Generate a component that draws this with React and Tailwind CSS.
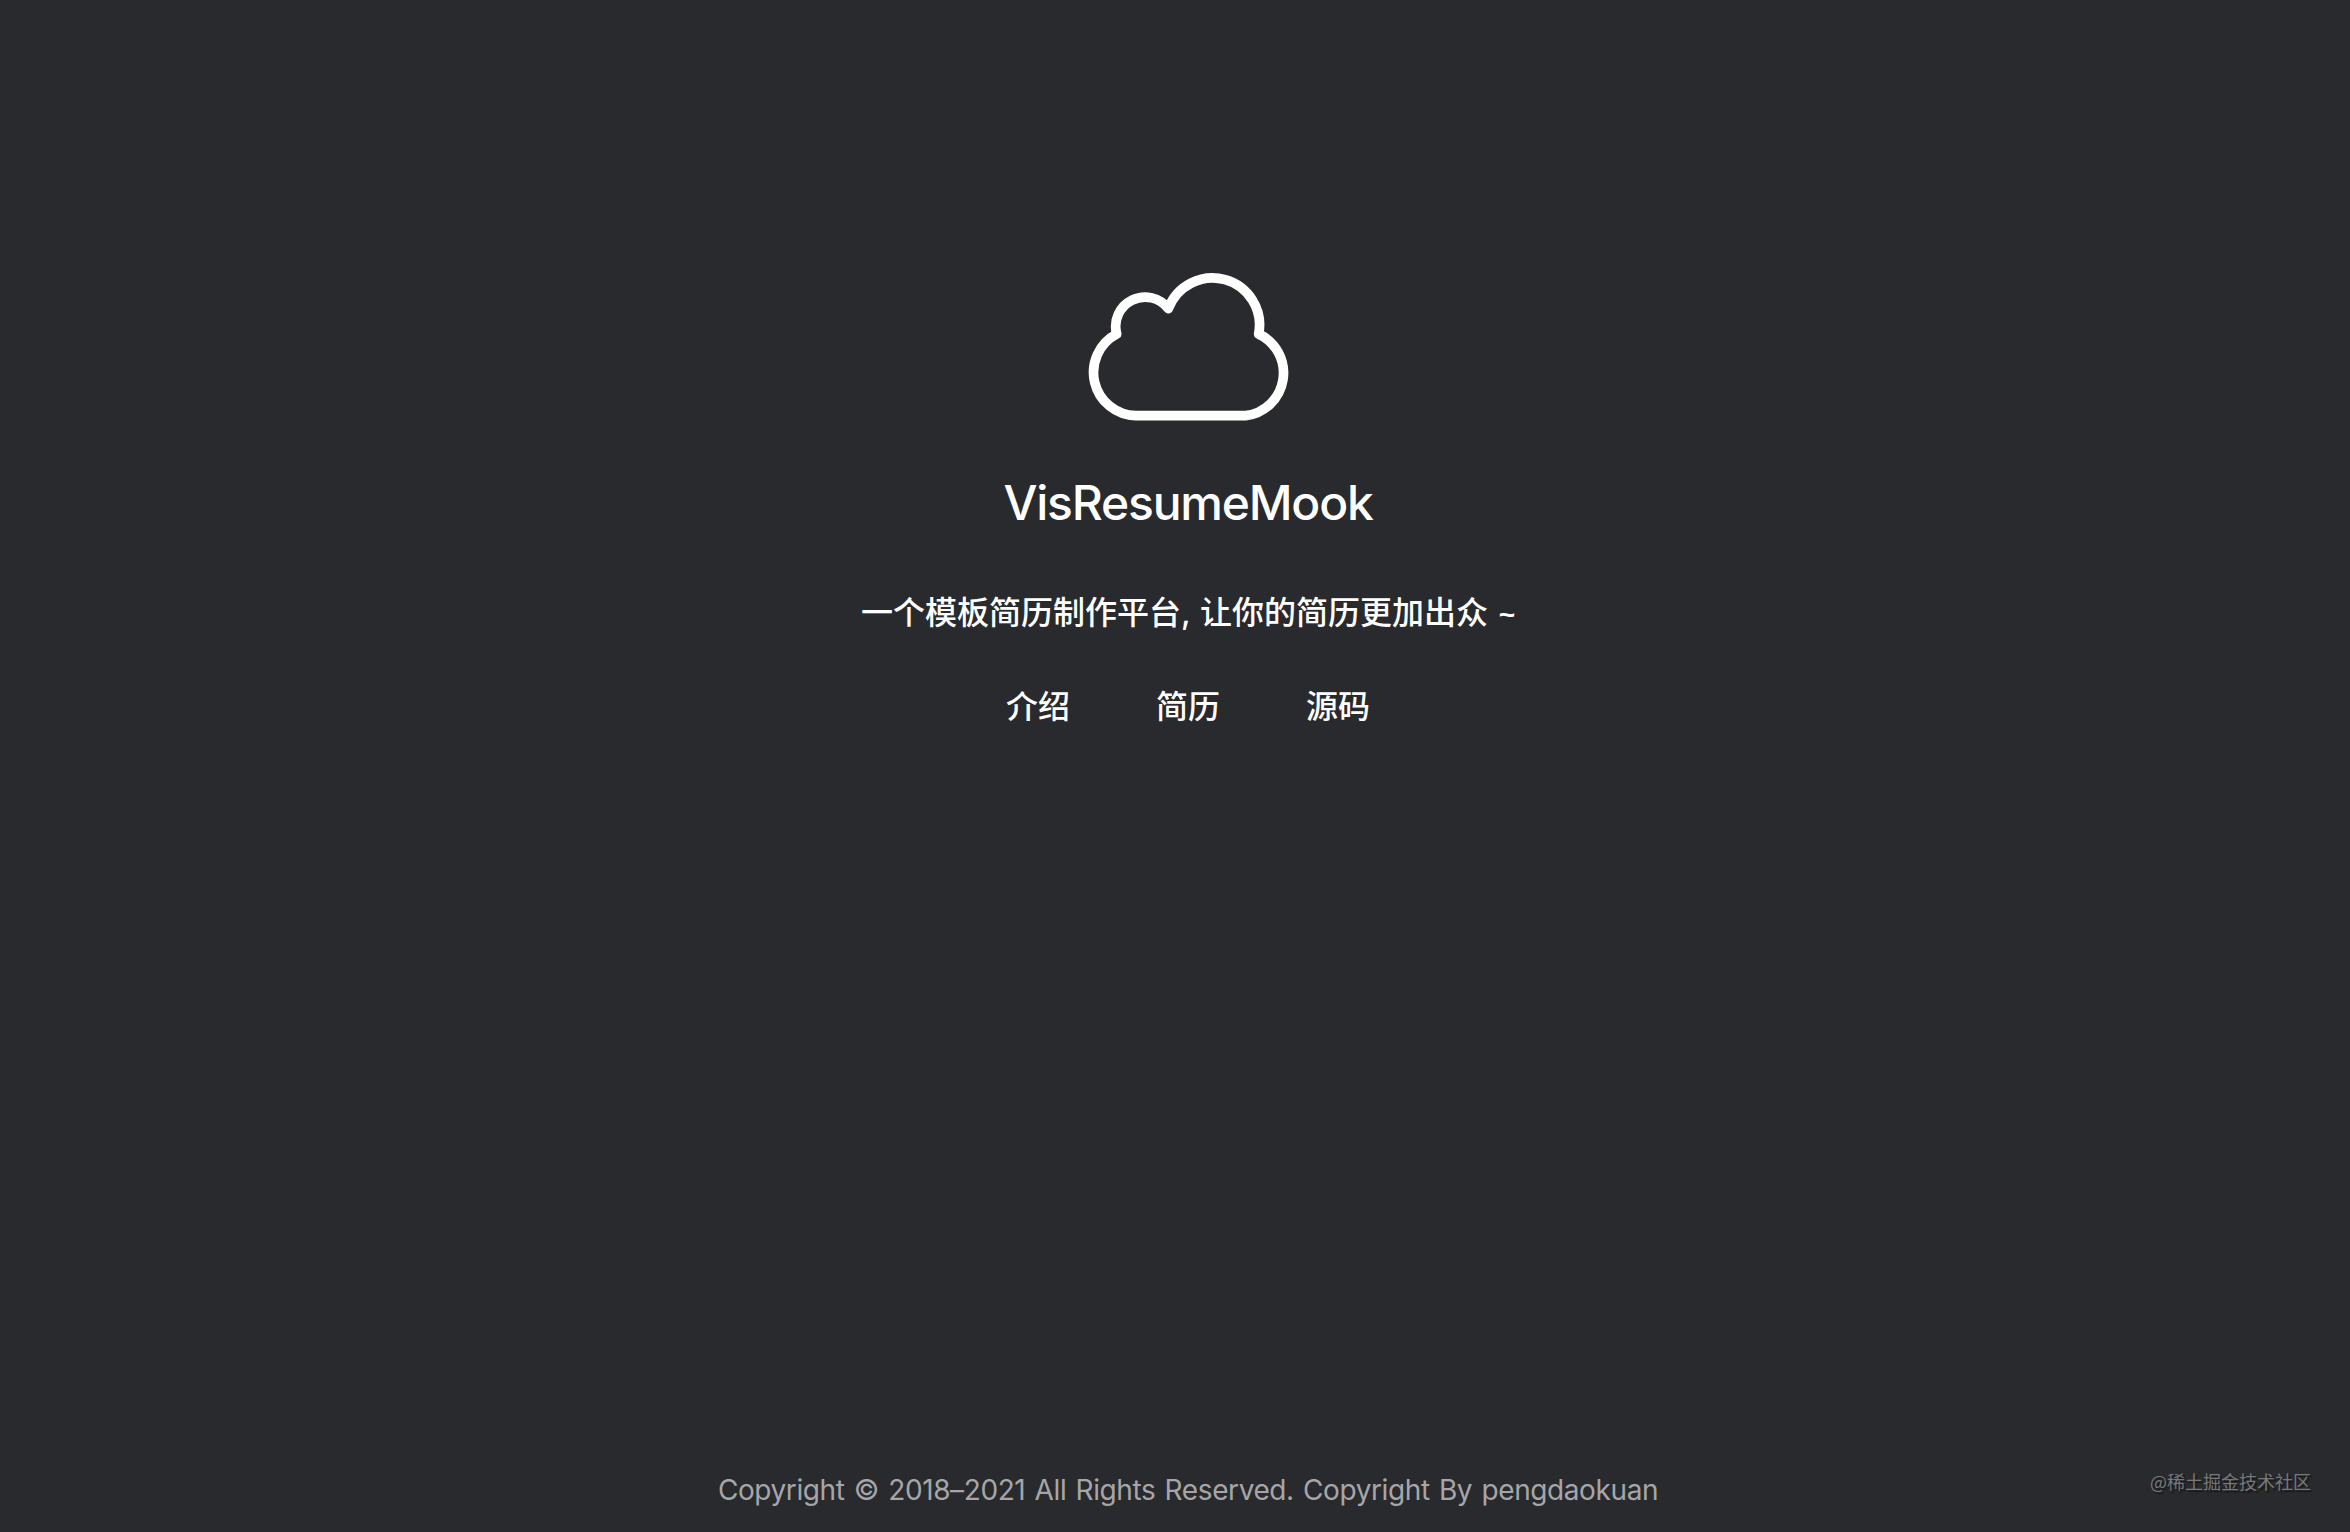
const links = ["介绍", "简历", "源码"];

function CloudLogo() {
  return (
    <svg viewBox="0 0 720 540" className="h-[180px] w-[240px]" fill="none" stroke="#fff" strokeWidth="29" strokeLinejoin="round">
      <path d="M198 467A130 130 0 0 1 140 222A88 88 0 0 1 295 146A141.2 141.2 0 0 1 566 222A129 129 0 0 1 527 467Z" />
    </svg>
  );
}

export default function App() {
  return (
    <div className="relative flex h-[1532px] w-[2350px] flex-col items-center overflow-hidden bg-[#292a2d] pl-[26px] font-['Inter','Noto_Sans_CJK_SC',sans-serif] text-white">
      <main className="flex flex-1 flex-col items-center pt-[260px]">
        <div className="ml-1">
          <CloudLogo />
        </div>
        <h1 className="mt-[31px] text-[48px] leading-[64px] font-medium tracking-[-1.2px] whitespace-nowrap">VisResumeMook</h1>
        <p className="mt-[51px] h-[48px] font-['Noto_Sans_CJK_SC',sans-serif] text-[32px] leading-[48px] font-medium whitespace-pre">
          一个模板简历制作平台<span className="mr-px font-['Inter',sans-serif]">, </span>让你的简历更加出众<span className="ml-[3px] font-['Liberation_Sans',sans-serif] text-[28px] font-bold"> ~</span>
        </p>
        <nav className="mt-[46px] flex gap-[86px] font-['Noto_Sans_CJK_SC',sans-serif] text-[32px] leading-[48px] font-medium">
          {links.map((label) => (
            <a key={label} href="#">{label}</a>
          ))}
        </nav>
      </main>
      <footer className="mb-[20px] text-[28px] leading-[44px] tracking-[-0.4px] [word-spacing:1.8px] whitespace-nowrap text-[#a6a6a8]">
        Copyright © 2018–2021 All Rights Reserved. Copyright By pengdaokuan
      </footer>
      <span className="absolute right-[39px] bottom-[38px] font-['Noto_Sans_CJK_SC',sans-serif] text-[18px] leading-[26px] text-[#77787a] [text-shadow:2px_2px_1px_#18181a]">
        @稀土掘金技术社区
      </span>
    </div>
  );
}
